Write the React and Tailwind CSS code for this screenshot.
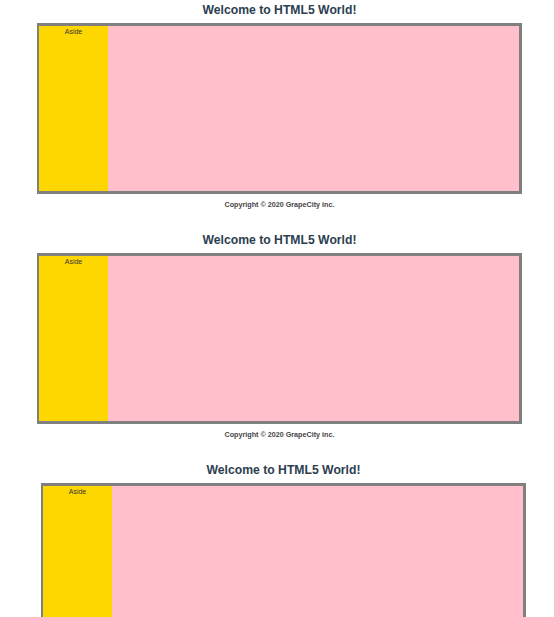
function Panel({ shift, footer }) {
  return (
    <section className={shift ? 'pl-[41px] w-[526px]' : 'pl-[37px] w-[522px]'}>
      <h1 className="h-[23px] text-center text-[12.2px] leading-[20px] font-bold text-[#2c3e50]">
        Welcome to HTML5 World!
      </h1>
      <div className="flex h-[171px] border-[3px] border-l-[2px] border-[#808080] bg-[#ffc0cb]">
        <aside className="w-[69px] shrink-0 bg-[#ffd700] text-center text-[7px] leading-[9px] pt-[1px] text-[#333]">
          Aside
        </aside>
        <main className="flex-1" />
      </div>
      {footer && (
        <footer className="h-[36px] pt-[6px] text-center text-[7.2px] leading-[9px] font-bold text-[#444]">
          Copyright © 2020 GrapeCity inc.
        </footer>
      )}
    </section>
  )
}

export default function App() {
  return (
    <div className="h-[617px] overflow-hidden bg-white font-['Liberation_Sans',Arial,sans-serif]">
      <Panel footer />
      <Panel footer />
      <Panel shift />
    </div>
  )
}
